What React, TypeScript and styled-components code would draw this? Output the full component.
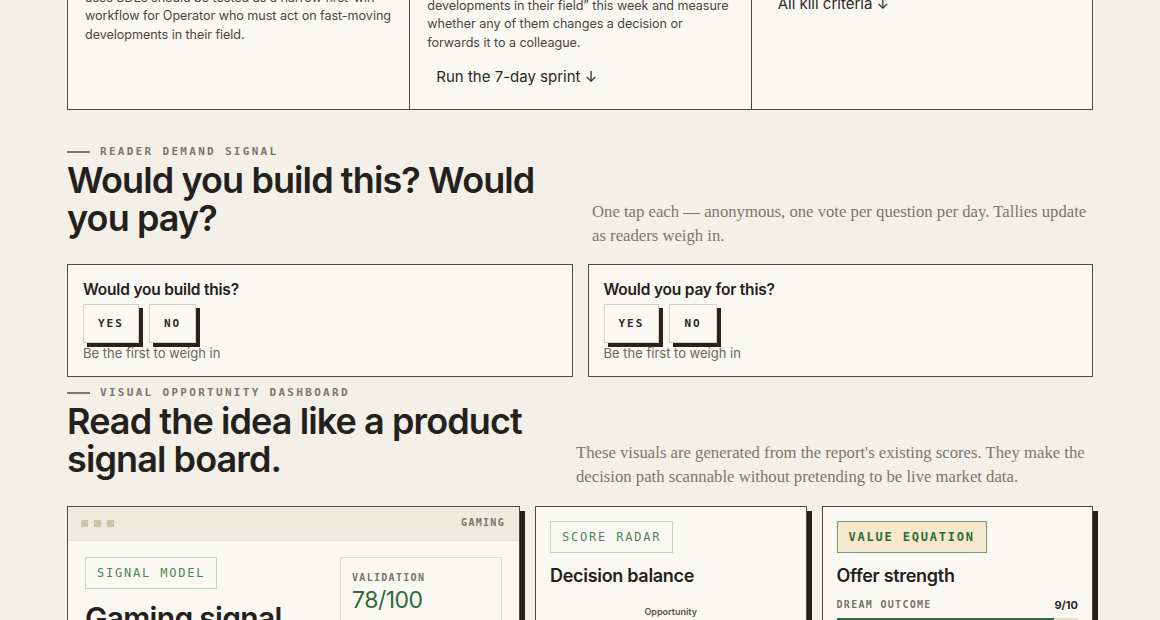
import React from 'react';
import styled, { createGlobalStyle } from 'styled-components';

const GlobalStyle = createGlobalStyle`
  html, body {
    margin: 0;
    padding: 0;
    background: #f3f0e8;
    overflow: hidden;
  }
  * { box-sizing: border-box; }
`;

const SANS = `Inter, "Noto Sans", sans-serif`;
const MONO = `"DejaVu Sans Mono", "Liberation Mono", monospace`;
const SERIF = `"Liberation Serif", "DejaVu Serif", serif`;

const Page = styled.div`
  width: 1026px;
  margin: 0 auto;
  color: #24211c;
  font-family: ${SANS};
`;

/* plan grid, partly scrolled out of view */
const PlanGrid = styled.div`
  margin-top: -80px;
  display: grid;
  grid-template-columns: repeat(3, 1fr);
  border: 1px solid #4d4a43;
  background: #faf8f3;
`;

const PlanCol = styled.div<{ $pt: number }>`
  padding: ${(p) => p.$pt}px 16px 20px 17px;
  border-left: 1px solid #4d4a43;
  &:first-child { border-left: none; }
`;

const PlanText = styled.p<{ $nowrap?: boolean }>`
  margin: 0;
  font-size: 12.6px;
  line-height: 18.2px;
  letter-spacing: -0.05px;
  color: #4a473f;
  white-space: ${(p) => (p.$nowrap ? 'nowrap' : 'normal')};
`;

const PlanAction = styled.div`
  display: inline-block;
  margin-top: 13px;
  padding: 3px 9px;
  font-size: 15px;
  line-height: 18px;
  color: #2b2822;
`;

const Section = styled.section<{ $mt: number }>`
  margin-top: ${(p) => p.$mt}px;
`;

const SectionHead = styled.div`
  display: flex;
  justify-content: space-between;
  align-items: flex-end;
`;

const HeadBlock = styled.div`
  padding-bottom: 11px;
`;

const Eyebrow = styled.div`
  display: flex;
  align-items: center;
  gap: 10px;
  font-family: ${MONO};
  font-weight: bold;
  font-size: 11px;
  line-height: 14px;
  letter-spacing: 2.3px;
  color: #7a776c;
  &::before {
    content: '';
    width: 23px;
    height: 2px;
    background: #7a776c;
  }
`;

const Heading = styled.h2<{ $w: number }>`
  margin: 2px 0 0;
  width: ${(p) => p.$w}px;
  font-size: 36px;
  line-height: 38px;
  font-weight: 600;
  letter-spacing: -0.9px;
  color: #24211c;
`;

const Lede = styled.p<{ $w: number }>`
  margin: 0;
  width: ${(p) => p.$w}px;
  font-family: ${SERIF};
  font-size: 16.7px;
  line-height: 24px;
  color: #7a776d;
`;

const VoteGrid = styled.div`
  margin-top: 16px;
  display: grid;
  grid-template-columns: 1fr 1fr;
  gap: 15px;
`;

const VoteCard = styled.div`
  border: 1px solid #4d4a43;
  background: #faf8f3;
  padding: 15px 15px 15px;
`;

const VoteTitle = styled.div`
  font-size: 15.5px;
  line-height: 20px;
  font-weight: 600;
  letter-spacing: -0.2px;
`;

const VoteRow = styled.div`
  display: flex;
  gap: 10px;
  margin-top: 4px;
`;

const VoteButton = styled.button`
  height: 39px;
  padding: 0 14px;
  border: 1px solid #d8d0bd;
  background: #faf8f3;
  box-shadow: 4px 4px 0 #26221c;
  font-family: ${MONO};
  font-weight: bold;
  font-size: 11px;
  letter-spacing: 2px;
  color: #2b2822;
`;

const VoteNote = styled.div`
  margin-top: 2px;
  font-size: 13px;
  line-height: 16px;
  color: #6b685f;
`;

const BoardGrid = styled.div`
  margin-top: 17px;
  display: grid;
  grid-template-columns: 453px 1fr 1fr;
  gap: 15px;
`;

const BoardCard = styled.div`
  border: 1px solid #4d4a43;
  background: #faf8f3;
  box-shadow: 5px 5px 0 #24211b;
  height: 300px;
`;

const WindowBar = styled.div`
  height: 34px;
  display: flex;
  align-items: center;
  justify-content: space-between;
  padding: 0 14px 0 13px;
  background: #edeade;
  border-bottom: 1px solid #e3ddce;
`;

const Dots = styled.div`
  display: flex;
  gap: 6px;
`;

const Dot = styled.span`
  width: 7px;
  height: 7px;
  background: #cdc4a8;
`;

const MonoTag = styled.div`
  font-family: ${MONO};
  font-weight: bold;
  font-size: 10px;
  line-height: 14px;
  letter-spacing: 1.3px;
  color: #77756a;
`;

const SignalBody = styled.div`
  display: grid;
  grid-template-columns: 1fr 162px;
  gap: 24px;
  padding: 16px 17px 0;
`;

const Badge = styled.div<{ $filled?: boolean }>`
  display: inline-block;
  padding: 8px 11px;
  font-family: ${MONO};
  font-size: 12px;
  line-height: 14px;
  letter-spacing: 1.8px;
  font-weight: ${(p) => (p.$filled ? 'bold' : 'normal')};
  color: ${(p) => (p.$filled ? '#2f6a3a' : '#4f8659')};
  background: ${(p) => (p.$filled ? '#f5e8cd' : 'transparent')};
  border: 1px solid ${(p) => (p.$filled ? '#6f9a71' : '#c3d6c6')};
`;

const BigTitle = styled.div`
  margin-top: 12px;
  font-size: 30px;
  line-height: 34px;
  font-weight: 600;
  letter-spacing: -0.7px;
`;

const ScoreBox = styled.div`
  border: 1px solid #e6dcc6;
  padding: 13px 11px;
  height: 120px;
`;

const ScoreValue = styled.div`
  margin-top: 2px;
  font-size: 23px;
  line-height: 26px;
  color: #2e6b3c;
  letter-spacing: -0.5px;
`;

const CardBody = styled.div`
  padding: 14px 14px 0 14px;
`;

const CardTitle = styled.div`
  margin-top: 11px;
  font-size: 18px;
  line-height: 24px;
  font-weight: 600;
  letter-spacing: -0.3px;
`;

const RadarWrap = styled.div`
  margin-top: 18px;
  display: flex;
  flex-direction: column;
  align-items: center;
`;

const RadarLabel = styled.div`
  font-size: 9px;
  line-height: 12px;
  font-weight: 600;
  color: #55524a;
`;

const MetricHead = styled.div`
  margin-top: 10px;
  display: flex;
  justify-content: space-between;
  align-items: center;
`;

const MetricValue = styled.div`
  font-size: 11px;
  line-height: 14px;
  font-weight: 700;
  color: #2b2822;
`;

const Bar = styled.div`
  margin-top: 6px;
  height: 6px;
  background: #e5e0d2;
`;

const BarFill = styled.div`
  height: 100%;
  background: #2e6b3c;
`;

const metrics = [
  { label: 'DREAM OUTCOME', score: 9 },
  { label: 'LIKELIHOOD', score: 7 },
];

const Radar = () => (
  <svg width="150" height="130" viewBox="0 0 150 130">
    <polygon points="75,6 140,52 115,124 35,124 10,52" fill="none" stroke="#ddd6c4" />
    <polygon points="75,36 110,60 97,100 53,100 40,60" fill="none" stroke="#e6e0d0" />
    <polygon points="75,18 128,55 100,110 48,108 25,56" fill="rgba(46,107,60,0.18)" stroke="#2e6b3c" strokeWidth="1.5" />
  </svg>
);

const App: React.FC = () => {
  return (
    <>
      <GlobalStyle />
      <Page>
        <PlanGrid>
          <PlanCol $pt={50}>
            <PlanText $nowrap>
              Readers say the pain is real; the product that
              <br />
              uses SDEs should be tested as a narrow first-win
              <br />
              workflow for Operator who must act on fast-moving
              <br />
              developments in their field.
            </PlanText>
          </PlanCol>
          <PlanCol $pt={58}>
            <PlanText>
              Hand-curate five briefings on &ldquo;fast-moving developments in
              their field&rdquo; this week and measure whether any of them changes
              a decision or forwards it to a colleague.
            </PlanText>
            <PlanAction>Run the 7-day sprint ↓</PlanAction>
          </PlanCol>
          <PlanCol $pt={22}>
            <PlanText>
              Stop if fewer than two readers act on a briefing this week.
            </PlanText>
            <PlanAction>All kill criteria ↓</PlanAction>
          </PlanCol>
        </PlanGrid>

        <Section $mt={35}>
          <SectionHead>
            <HeadBlock>
              <Eyebrow>READER DEMAND SIGNAL</Eyebrow>
              <Heading $w={500}>Would you build this? Would you pay?</Heading>
            </HeadBlock>
            <Lede $w={501}>
              One tap each — anonymous, one vote per question per day. Tallies
              update as readers weigh in.
            </Lede>
          </SectionHead>
          <VoteGrid>
            {['Would you build this?', 'Would you pay for this?'].map((q) => (
              <VoteCard key={q}>
                <VoteTitle>{q}</VoteTitle>
                <VoteRow>
                  <VoteButton>YES</VoteButton>
                  <VoteButton>NO</VoteButton>
                </VoteRow>
                <VoteNote>Be the first to weigh in</VoteNote>
              </VoteCard>
            ))}
          </VoteGrid>
        </Section>

        <Section $mt={9}>
          <SectionHead>
            <HeadBlock>
              <Eyebrow>VISUAL OPPORTUNITY DASHBOARD</Eyebrow>
              <Heading $w={490}>Read the idea like a product signal board.</Heading>
            </HeadBlock>
            <Lede $w={517}>
              These visuals are generated from the report's existing scores. They
              make the decision path scannable without pretending to be live
              market data.
            </Lede>
          </SectionHead>
          <BoardGrid>
            <BoardCard>
              <WindowBar>
                <Dots>
                  <Dot />
                  <Dot />
                  <Dot />
                </Dots>
                <MonoTag>GAMING</MonoTag>
              </WindowBar>
              <SignalBody>
                <div>
                  <Badge>SIGNAL MODEL</Badge>
                  <BigTitle>Gaming signal</BigTitle>
                </div>
                <ScoreBox>
                  <MonoTag>VALIDATION</MonoTag>
                  <ScoreValue>78/100</ScoreValue>
                </ScoreBox>
              </SignalBody>
            </BoardCard>
            <BoardCard>
              <CardBody>
                <Badge>SCORE RADAR</Badge>
                <CardTitle>Decision balance</CardTitle>
                <RadarWrap>
                  <RadarLabel>Opportunity</RadarLabel>
                  <Radar />
                </RadarWrap>
              </CardBody>
            </BoardCard>
            <BoardCard>
              <CardBody>
                <Badge $filled>VALUE EQUATION</Badge>
                <CardTitle>Offer strength</CardTitle>
                {metrics.map((m) => (
                  <div key={m.label}>
                    <MetricHead>
                      <MonoTag>{m.label}</MonoTag>
                      <MetricValue>{m.score}/10</MetricValue>
                    </MetricHead>
                    <Bar>
                      <BarFill style={{ width: `${m.score * 10}%` }} />
                    </Bar>
                  </div>
                ))}
              </CardBody>
            </BoardCard>
          </BoardGrid>
        </Section>
      </Page>
    </>
  );
};

export default App;
